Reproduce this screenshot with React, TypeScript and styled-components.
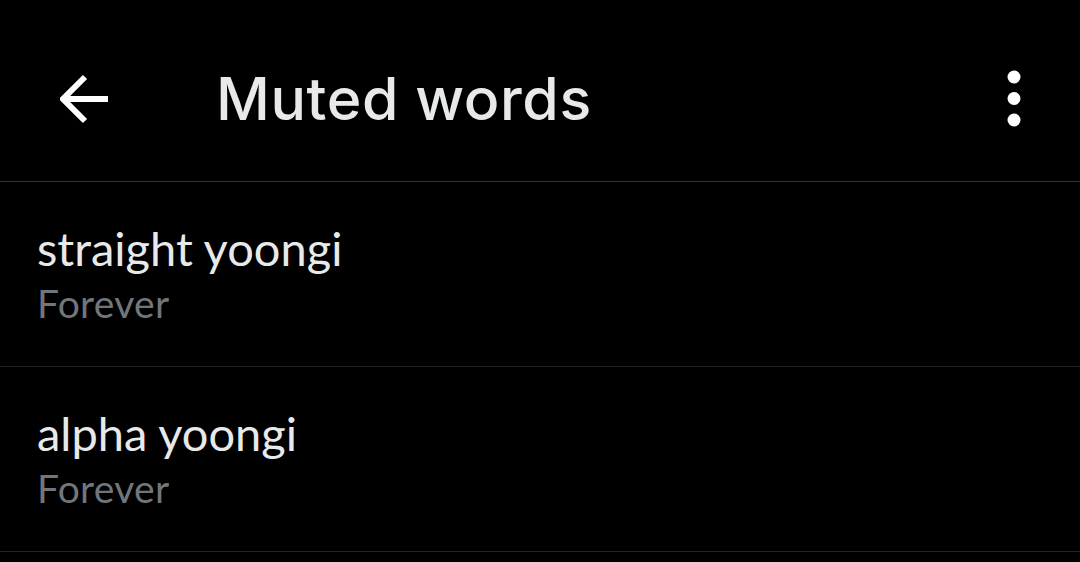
import React from "react";
import styled, { createGlobalStyle } from "styled-components";

const Global = createGlobalStyle`
  html, body { margin: 0; padding: 0; background: #000; }
  body { width: 1080px; height: 562px; overflow: hidden; }
`;

const Page = styled.div`
  width: 1080px;
  height: 562px;
  background: #000;
  display: flex;
  flex-direction: column;
`;

const Header = styled.header`
  height: 182px;
  box-sizing: border-box;
  display: flex;
  align-items: center;
  padding: 16px 56px 0 60px;
  border-bottom: 1px solid #2f3336;
`;

const IconButton = styled.button`
  background: none;
  border: none;
  padding: 0;
  display: flex;
  align-items: center;
  justify-content: center;
  color: #fff;
  cursor: pointer;
`;

const Title = styled.h1`
  margin: 0 0 0 106px;
  flex: 1;
  font-family: Inter, "Noto Sans", sans-serif;
  font-weight: 500;
  font-size: 59px;
  color: #e7e9ea;
  letter-spacing: 0.6px;
`;

const Row = styled.div`
  height: 185px;
  box-sizing: border-box;
  border-bottom: 1px solid #202327;
  padding: 38px 37px 0;
  display: flex;
  flex-direction: column;
`;

const Word = styled.div`
  font-family: Lato, "Noto Sans", sans-serif;
  font-size: 47px;
  color: #e7e9ea;
  line-height: 56px;
`;

const Duration = styled.div`
  font-family: Lato, "Noto Sans", sans-serif;
  font-size: 39px;
  color: #71767b;
  line-height: 54px;
  letter-spacing: 0.3px;
`;

const items = [
  { word: "straight yoongi", duration: "Forever" },
  { word: "alpha yoongi", duration: "Forever" },
];

export default function App() {
  return (
    <Page>
      <Global />
      <Header>
        <IconButton aria-label="Back">
          <svg width="50" height="52" viewBox="0 0 50 52" fill="none">
            <path d="M48 26H4M25 4L3 26l22 22" stroke="#fff" strokeWidth="6" />
          </svg>
        </IconButton>
        <Title>Muted words</Title>
        <IconButton aria-label="More">
          <svg width="20" height="60" viewBox="0 0 20 60">
            <circle cx="10" cy="8" r="6.5" fill="#fff" />
            <circle cx="10" cy="29.5" r="6.5" fill="#fff" />
            <circle cx="10" cy="51" r="6.5" fill="#fff" />
          </svg>
        </IconButton>
      </Header>
      {items.map((it, i) => (
        <Row key={i}>
          <Word>{it.word}</Word>
          <Duration>{it.duration}</Duration>
        </Row>
      ))}
    </Page>
  );
}
